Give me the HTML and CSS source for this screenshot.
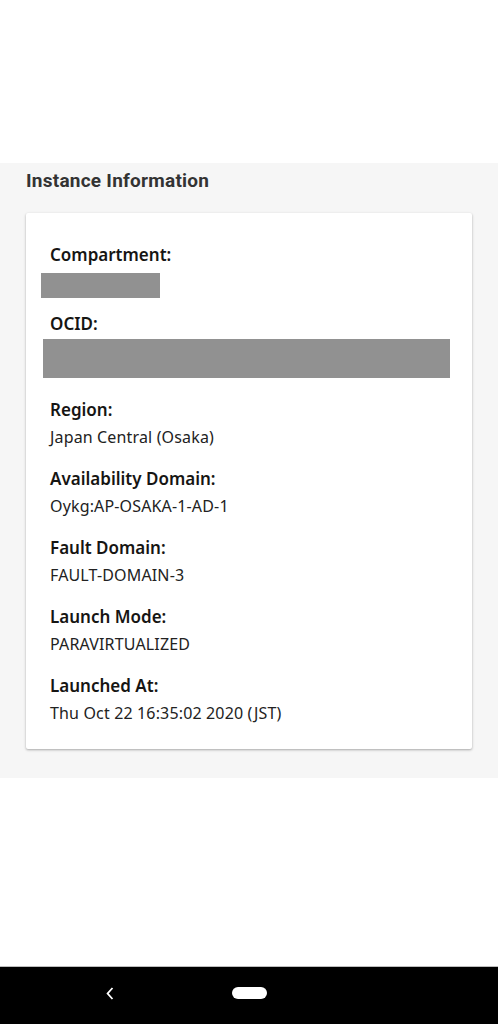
FILE: index.html
```html
<!DOCTYPE html>
<html>
<head>
<meta charset="utf-8">
<link rel="stylesheet" href="styles.css">
</head>
<body>
<div class="screen">
  <div class="top-space"></div>
  <section class="info-section">
    <h2 class="section-title">Instance Information</h2>
    <div class="card">
      <div class="label">Compartment:</div>
      <div class="redact redact-short"></div>
      <div class="label label-ocid">OCID:</div>
      <div class="redact redact-long"></div>
      <div class="field">
        <div class="label">Region:</div>
        <div class="value">Japan Central (Osaka)</div>
      </div>
      <div class="field">
        <div class="label">Availability Domain:</div>
        <div class="value">Oykg:AP-OSAKA-1-AD-1</div>
      </div>
      <div class="field">
        <div class="label">Fault Domain:</div>
        <div class="value">FAULT-DOMAIN-3</div>
      </div>
      <div class="field">
        <div class="label">Launch Mode:</div>
        <div class="value">PARAVIRTUALIZED</div>
      </div>
      <div class="field">
        <div class="label">Launched At:</div>
        <div class="value">Thu Oct 22 16:35:02 2020 (JST)</div>
      </div>
    </div>
  </section>
  <div class="fill"></div>
  <nav class="navbar">
    <svg class="nav-back" width="8" height="13" viewBox="0 0 8 13"><path d="M6.5 1 L1.6 6.5 L6.5 12" fill="none" stroke="#fff" stroke-width="1.8"/></svg>
    <div class="nav-home"></div>
  </nav>
</div>
</body>
</html>
```

FILE: styles.css
```css
html, body {
  margin: 0;
  padding: 0;
  background: #ffffff;
}
.screen {
  display: flex;
  flex-direction: column;
  height: 1024px;
  width: 498px;
}
.top-space {
  height: 163px;
  flex: none;
}
.info-section {
  background: #f6f6f6;
  padding: 6px 26px 29px 26px;
}
.section-title {
  margin: 0 0 20px 0;
  font-family: Roboto, "Liberation Sans", sans-serif;
  font-weight: 700;
  font-size: 19px;
  letter-spacing: 0.25px;
  line-height: 24px;
  color: #333333;
}
.card {
  background: #ffffff;
  border-radius: 2px;
  box-shadow: 0 1px 3px rgba(0,0,0,0.22), 0 1px 2px rgba(0,0,0,0.12);
  padding: 31px 24px 26px 24px;
}
.label {
  font-family: "Noto Sans", "Open Sans", sans-serif;
  font-weight: 600;
  font-size: 17px;
  line-height: 22px;
  color: #161513;
}
.value {
  margin-top: 6px;
  font-family: "Noto Sans", "Open Sans", sans-serif;
  font-size: 16px;
  letter-spacing: 0.15px;
  line-height: 20px;
  color: #222222;
}
.field {
  margin-top: 21px;
}
.redact {
  background: #919191;
}
.redact-short {
  margin: 7px 0 0 -9px;
  width: 119px;
  height: 25px;
}
.label-ocid {
  margin-top: 15px;
}
.redact-long {
  margin: 4px 0 0 -7px;
  width: 407px;
  height: 39px;
}
.fill {
  flex: 1;
}
.navbar {
  flex: none;
  height: 57px;
  background: #000000;
  border-top: 1px solid #bdbdbd;
  position: relative;
}
.nav-back {
  position: absolute;
  left: 106px;
  top: 20px;
}
.nav-home {
  position: absolute;
  left: 232px;
  top: 20px;
  width: 35px;
  height: 12px;
  border-radius: 6px;
  background: #ffffff;
}
```
